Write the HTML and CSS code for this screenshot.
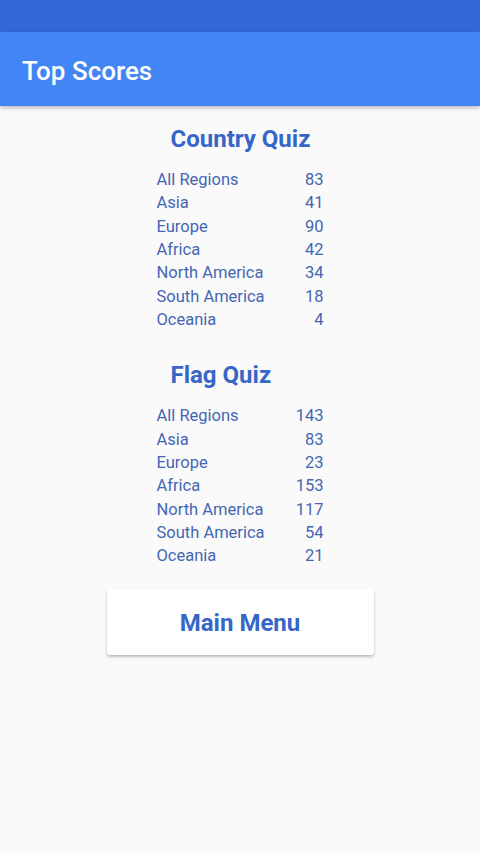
FILE: index.html
```html
<!DOCTYPE html>
<html lang="en">
<head>
    <meta charset="UTF-8">
    <meta name="viewport" content="width=device-width, initial-scale=1.0">
    <title>Top Scores</title>
    <link rel="stylesheet" href="styles.css">
</head>
<body>

    <div class="status-bar"></div>
    <header class="app-bar">
        <h1>Top Scores</h1>
    </header>

    <main class="content">
        <div class="scores">
            <h2 class="quiz-title">Country Quiz</h2>
            <div class="score-table">
                <span>All Regions</span><span class="num">83</span>
                <span>Asia</span><span class="num">41</span>
                <span>Europe</span><span class="num">90</span>
                <span>Africa</span><span class="num">42</span>
                <span>North America</span><span class="num">34</span>
                <span>South America</span><span class="num">18</span>
                <span>Oceania</span><span class="num">4</span>
            </div>

            <h2 class="quiz-title second">Flag Quiz</h2>
            <div class="score-table">
                <span>All Regions</span><span class="num">143</span>
                <span>Asia</span><span class="num">83</span>
                <span>Europe</span><span class="num">23</span>
                <span>Africa</span><span class="num">153</span>
                <span>North America</span><span class="num">117</span>
                <span>South America</span><span class="num">54</span>
                <span>Oceania</span><span class="num">21</span>
            </div>
        </div>

        <button class="menu-button">Main Menu</button>
    </main>

</body>
</html>
```

FILE: styles.css
```css
body {
    margin: 0;
    background-color: #fafafa;
    font-family: Roboto, "Liberation Sans", sans-serif;
    height: 853px;
    overflow: hidden;
}

.status-bar {
    height: 32px;
    background-color: #3367d6;
}

.app-bar {
    height: 74px;
    background-color: #4285f4;
    display: flex;
    align-items: center;
    padding-left: 22px;
    box-shadow: 0 2px 4px rgba(0, 0, 0, 0.25);
    position: relative;
}

.app-bar h1 {
    margin: 0;
    padding-top: 3px;
    color: #ffffff;
    font-size: 26px;
    font-weight: 500;
}

.content {
    display: flex;
    flex-direction: column;
    align-items: center;
    padding-top: 18px;
}

.scores {
    width: 167px;
}

.quiz-title {
    margin: 0;
    padding-left: 14px;
    color: #3566c8;
    font-size: 24px;
    font-weight: 700;
    line-height: 30px;
    white-space: nowrap;
}

.quiz-title.second {
    margin-top: 29px;
}

.score-table {
    display: grid;
    grid-template-columns: 1fr auto;
    margin-top: 14px;
    color: #4466b4;
    font-size: 16.5px;
    line-height: 23.33px;
}

.score-table .num {
    text-align: right;
}

.menu-button {
    margin-top: 21px;
    width: 267px;
    height: 66px;
    padding-top: 3px;
    border: none;
    border-radius: 3px;
    background-color: #ffffff;
    box-shadow: 0 2px 3px rgba(0, 0, 0, 0.25);
    color: #3566c8;
    font-family: Roboto, "Liberation Sans", sans-serif;
    font-size: 24px;
    font-weight: 700;
    cursor: pointer;
}
```
